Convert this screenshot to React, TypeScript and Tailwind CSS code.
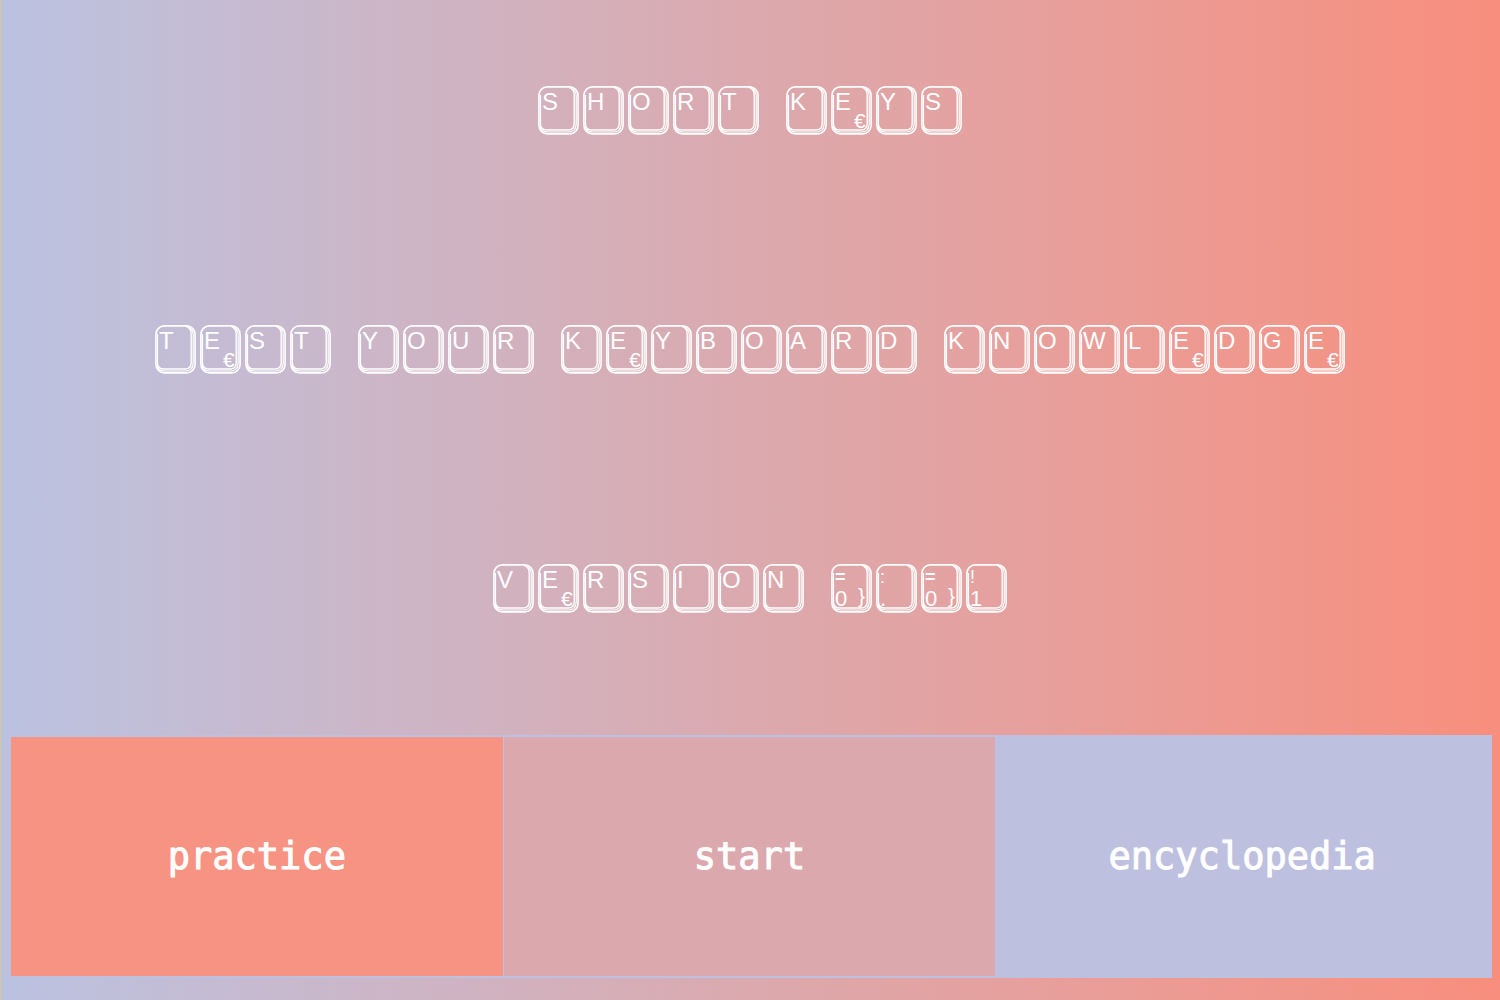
type Legend = { top: string; bottom?: string; corner?: string };

const LEGENDS: Record<string, Legend> = {
  E: { top: "E", corner: "€" },
  "0": { top: "=", bottom: "0", corner: "}" },
  ".": { top: ":", bottom: "." },
  "1": { top: "!", bottom: "1" },
};

function Key({ char }: { char: string }) {
  const legend = LEGENDS[char] ?? { top: char };
  const symbol = legend.bottom !== undefined;
  const brace = legend.corner === "}";
  return (
    <svg
      viewBox="0 0 41 49"
      className="h-[49px] w-[41px] shrink-0 font-['Liberation_Sans',sans-serif]"
      fill="none"
      stroke="currentColor"
    >
      <rect x="0.9" y="0.9" width="39.2" height="47" rx="8.5" strokeWidth="1.6" />
      <path d="M2.4 9 V37.5 Q2.4 44 9 44 H30 Q36.2 44 36.2 37.5 V9 Q36.2 3 31 1.4" strokeWidth="1.4" />
      <path d="M33.5 2.5 Q38.2 4.5 38.2 10 V38 Q38 46 30 46 H10 Q4 45.8 2 41" strokeWidth="1.2" />
      <g fill="currentColor" stroke="none">
        <text
          x="4"
          y={symbol ? 19 : 24}
          fontSize={symbol ? 18 : 24}
          fontWeight={legend.top === "=" ? 700 : 400}
        >
          {legend.top}
        </text>
        {symbol && <text x="4" y="42" fontSize="22">{legend.bottom}</text>}
        {legend.corner && (
          <text x={brace ? 27 : 23} y={brace ? 39 : 42} fontSize="21">{legend.corner}</text>
        )}
      </g>
    </svg>
  );
}

function Keys({ text }: { text: string }) {
  return (
    <span className="flex flex-wrap justify-center gap-x-[27px] gap-y-2">
      {text.split(" ").map((word, i) => (
        <span key={i} className="flex gap-1">
          {word.split("").map((char, j) => (
            <Key key={j} char={char} />
          ))}
        </span>
      ))}
    </span>
  );
}

export default function App() {
  return (
    <main className="flex min-h-screen flex-col border-l border-[#d9c795] bg-linear-to-r from-[#bac2e1] via-[#dba9ae] to-[#f88e7d] px-2 pb-[22px] text-white">
      <header className="flex flex-1 flex-col justify-between gap-12 pt-[86px] pr-px pb-[122px]">
        <h1><Keys text="SHORT KEYS" /></h1>
        <h2><Keys text="TEST YOUR KEYBOARD KNOWLEDGE" /></h2>
        <p><Keys text="VERSION 0.01" /></p>
      </header>
      <nav className="grid h-[243px] grid-cols-3 gap-px bg-[#bdc0de] py-0.5 pr-1 pl-0.5 font-['DejaVu_Sans_Mono',monospace] text-[37px]">
        <button className="bg-[#f69382] [-webkit-text-stroke:1px_white]">practice</button>
        <button className="bg-[#dba8ae] [-webkit-text-stroke:1px_white]">start</button>
        <button className="bg-[#bdc0de] [-webkit-text-stroke:1px_white]">encyclopedia</button>
      </nav>
    </main>
  );
}
